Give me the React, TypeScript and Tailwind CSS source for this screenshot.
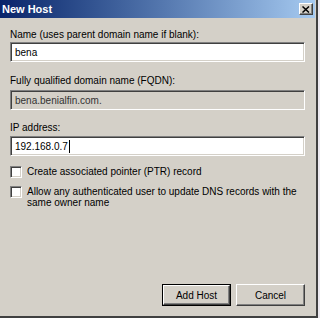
const font = { fontFamily: '"Liberation Sans", Arial, sans-serif' };

const Field = ({
  value,
  disabled = false,
  caret = false,
}: {
  value: string;
  disabled?: boolean;
  caret?: boolean;
}) => (
  <div
    className={`flex h-[20px] w-[295px] items-center border border-t-[#808080] border-l-[#808080] border-b-white border-r-white pl-[4px] text-[10px] shadow-[inset_1px_1px_0_#404040,inset_-1px_-1px_0_#d4d0c8] ${
      disabled ? "bg-[#d4d0c8] text-[#333]" : "bg-white text-black"
    }`}
  >
    <span>{value}</span>
    {caret && <span className="ml-px h-[13px] w-px bg-black" />}
  </div>
);

const Checkbox = () => (
  <div className="h-[12px] w-[12px] shrink-0 border border-t-[#808080] border-l-[#808080] border-b-white border-r-white bg-white shadow-[inset_1px_1px_0_#404040,inset_-1px_-1px_0_#d4d0c8]" />
);

const Button = ({ label, primary = false }: { label: string; primary?: boolean }) => (
  <div
    className={`flex h-[22px] w-[69px] items-center justify-center text-[10px] text-black ${
      primary ? "border border-black" : ""
    }`}
  >
    <div className="flex h-full w-full items-center justify-center border border-t-white border-l-white border-b-[#404040] border-r-[#404040] shadow-[inset_-1px_-1px_0_#808080]">
      {label}
    </div>
  </div>
);

export default function App() {
  return (
    <div className="flex h-[318px] w-[320px] bg-[#d4d0c8]" style={font}>
      <div className="flex h-[318px] w-[318px] flex-col border-b-2 border-r-2 border-b-[#404040] border-r-[#404040] bg-[#d4d0c8]">
        {/* title bar */}
        <div className="mr-px flex h-[18px] shrink-0 items-center justify-between bg-linear-to-r from-[#0a246a] to-[#a6caf0] pl-[2px] pr-[2px]">
          <span className="text-[11px] font-bold text-white">New Host</span>
          <div className="flex h-[12px] w-[14px] items-center justify-center border border-t-white border-l-white border-b-[#404040] border-r-[#404040] bg-[#d4d0c8] shadow-[inset_-1px_-1px_0_#808080]">
            <svg width="8" height="7" viewBox="0 0 8 7">
              <path d="M0.5 0.5 L7 6.5 M7 0.5 L0.5 6.5" stroke="#000" strokeWidth="1.5" />
            </svg>
          </div>
        </div>

        <div className="flex flex-1 flex-col pl-[10px] text-[10px] text-black">
          <div className="mt-[11px] h-[12px] leading-[12px]">
            Name (uses parent domain name if blank):
          </div>
          <div className="mt-px">
            <Field value="bena" />
          </div>

          <div className="mt-[13px] h-[12px] leading-[12px]">
            Fully qualified domain name (FQDN):
          </div>
          <div className="mt-[3px]">
            <Field value="bena.benialfin.com." disabled />
          </div>

          <div className="mt-[12px] h-[12px] leading-[12px]">IP address:</div>
          <div className="mt-[2px]">
            <Field value="192.168.0.7" caret />
          </div>

          <div className="mt-[10px] flex items-center gap-[5px] leading-[12px]">
            <Checkbox />
            <span>Create associated pointer (PTR) record</span>
          </div>
          <div className="mt-[8px] flex items-start gap-[5px] leading-[11px]">
            <Checkbox />
            <span className="w-[280px]">
              Allow any authenticated user to update DNS records with the
              <br />
              same owner name
            </span>
          </div>

          <div className="mb-[10px] mt-auto flex w-[295px] justify-end gap-[5px]">
            <Button label="Add Host" primary />
            <Button label="Cancel" />
          </div>
        </div>
      </div>
      <div className="h-full w-[2px] bg-[#ece9f0]" />
    </div>
  );
}
